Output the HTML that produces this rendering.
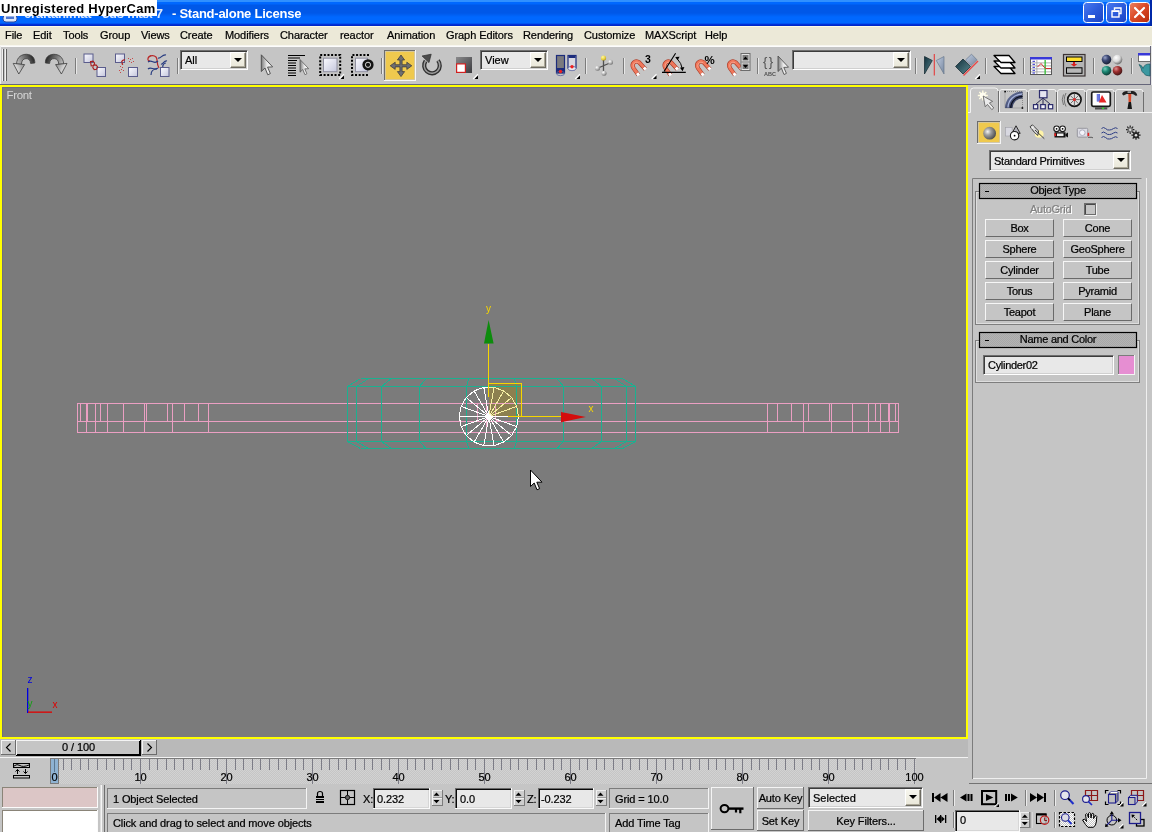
<!DOCTYPE html>
<html><head><meta charset="utf-8"><title>3dsmax</title>
<style>
*{box-sizing:border-box;margin:0;padding:0}
html,body{width:1152px;height:832px;overflow:hidden;background:#c5c5c5;font-family:"Liberation Sans",sans-serif;font-size:11px;color:#000}
.a{position:absolute}
#menu span,.tx,.rt,.bt,.bx{-webkit-text-stroke:.22px currentColor}
svg{display:block;overflow:hidden}
#title{left:0;top:0;width:1152px;height:26px;background:linear-gradient(#3090ff 0,#3090ff 2px,#0068ff 2px,#0068ff 4px,#0058e8 5px,#0058e8 13px,#0068ff 17px,#0068ff 23px,#0030d8 24.5px,#0024c0 26px)}
#title .t{left:172px;top:6px;color:#fff;font-weight:bold;font-size:13px;line-height:15px;white-space:nowrap;letter-spacing:-.25px}
#hc{left:0;top:0;width:157px;height:16px;background:#fff}
#hc span{position:absolute;left:1px;top:1px;font-weight:bold;font-size:13px;line-height:15px;white-space:nowrap;color:#000;letter-spacing:.27px}
.wb{top:2px;width:21px;height:21px;border:1px solid #fff;border-radius:3.5px;background:linear-gradient(135deg,#4878f0 0,#2c5cdc 50%,#1c44c4 100%)}
#menu{left:0;top:26px;width:1152px;height:19px;background:#ece9d8;border-top:1px solid #fbfbe8}
#menu span{position:absolute;letter-spacing:-.08px;top:2px;font-size:11px;line-height:13px;white-space:nowrap}
#vp{left:0;top:85px;width:968px;height:654px;background:#7b7b7b;border:2px solid #ffff00;box-shadow:inset 1px 1px 0 #6e6e7c}

#rp{left:968px;top:85px;width:184px;height:700px;background:#c5c5c5}
#bot{left:0;top:739px;width:1152px;height:93px;background:#c5c5c5}
/* sunken combo / edit */
.sk{position:absolute;background:#e8e8e8;border:1px solid;border-color:#6e6e6e #fff #fff #6e6e6e;box-shadow:inset 1px 1px 0 #3c3c3c,inset -1px -1px 0 #d0d0d0;white-space:nowrap;overflow:hidden}
.sk .tx{position:absolute;left:4px;top:3px;font-size:11px;line-height:13px}
.cb{position:absolute;right:1px;top:1px;bottom:1px;width:16px;background:linear-gradient(#f7f6ee,#e9e7d9);border:1px solid;border-color:#fff #6c6a60 #6c6a60 #fff;box-shadow:inset -1px -1px 0 #aca899}
.cb:after{content:"";position:absolute;left:3px;top:5px;border:4px solid transparent;border-top:4px solid #000;border-bottom:0}
</style></head><body><div id="w" style="position:absolute;left:0;top:0;width:1152px;height:832px;overflow:hidden;will-change:transform">
<div id="title" class="a"><span class="a t" style="left:24px;opacity:.85">craftanimat - 3ds max 7</span><span class="a t">- Stand-alone License</span>
<svg class="a" style="left:2px;top:14px" width="17" height="9" viewBox="0 0 17 9"><rect x="1" y="1" width="14" height="7" rx="3" fill="#dfe8f8" stroke="#2848a0" stroke-width="1"/><rect x="4" y="2.500" width="8" height="2.500" fill="#5078d0"/></svg>
<div id="hc" class="a"><span>Unregistered HyperCam</span></div>
<div class="a" style="left:1150px;top:0;width:2px;height:26px;background:#0028a8"></div>
<div class="a wb" style="left:1083px"><svg width="19" height="19" viewBox="0 0 19 19"><rect x="4" y="12" width="7" height="3" fill="#fff"/></svg></div>
<div class="a wb" style="left:1106px"><svg width="19" height="19" viewBox="0 0 19 19"><path d="M7.500 7 V5 H14 V10.500 H12" fill="none" stroke="#fff" stroke-width="1.400"/><rect x="5" y="8" width="7" height="6" fill="none" stroke="#fff" stroke-width="1.400"/><rect x="5" y="7.500" width="7" height="1.500" fill="#fff"/></svg></div>
<div class="a wb" style="left:1129px;background:linear-gradient(135deg,#ec8060 0,#dc4c28 45%,#b82c0c 100%)"><svg width="19" height="19" viewBox="0 0 19 19"><path d="M5 5 L14 14 M14 5 L5 14" stroke="#fff" stroke-width="2.200" stroke-linecap="round"/></svg></div>
</div>
<div id="menu" class="a">
<span style="left:5px">File</span><span style="left:33px">Edit</span><span style="left:63px">Tools</span><span style="left:100px">Group</span><span style="left:141px">Views</span><span style="left:180px">Create</span><span style="left:225px">Modifiers</span><span style="left:280px">Character</span><span style="left:340px">reactor</span><span style="left:387px">Animation</span><span style="left:446px">Graph Editors</span><span style="left:523px">Rendering</span><span style="left:584px">Customize</span><span style="left:645px">MAXScript</span><span style="left:705px">Help</span>
</div>
<svg class="a" style="left:0;top:45px" width="1152" height="40" viewBox="0 45 1152 40">
<defs>
<linearGradient id="gUndo" gradientUnits="userSpaceOnUse" x1="13" y1="70" x2="35" y2="60"><stop offset="0" stop-color="#fafafa"/><stop offset=".4" stop-color="#a4a4a4"/><stop offset=".75" stop-color="#5c5c5c"/><stop offset="1" stop-color="#242424"/></linearGradient>
<linearGradient id="gRedo" x1="1" y1="1" x2="0" y2="0"><stop offset="0" stop-color="#f4f4f4"/><stop offset=".5" stop-color="#a8a8a8"/><stop offset="1" stop-color="#383838"/></linearGradient>
<linearGradient id="gSq" x1="0" y1="0" x2="1" y2="1"><stop offset="0" stop-color="#fbfbff"/><stop offset="1" stop-color="#c4c6dc"/></linearGradient>
<linearGradient id="gCur" x1="0" y1="0" x2="1" y2="0"><stop offset="0" stop-color="#7c7c7c"/><stop offset=".5" stop-color="#e8e8e8"/><stop offset="1" stop-color="#fff"/></linearGradient>
<linearGradient id="gMag" x1="0" y1="0" x2="1" y2="1"><stop offset="0" stop-color="#f08a6c"/><stop offset="1" stop-color="#d8452c"/></linearGradient>
<radialGradient id="bNavy" cx=".35" cy=".3" r=".8"><stop offset="0" stop-color="#9aa4c8"/><stop offset=".4" stop-color="#3c4874"/><stop offset="1" stop-color="#141828"/></radialGradient>
<radialGradient id="bWhite" cx=".35" cy=".3" r=".8"><stop offset="0" stop-color="#fff"/><stop offset=".5" stop-color="#d8d8d8"/><stop offset="1" stop-color="#505050"/></radialGradient>
<radialGradient id="bTeal" cx=".35" cy=".3" r=".8"><stop offset="0" stop-color="#7cd0c0"/><stop offset=".4" stop-color="#1c8874"/><stop offset="1" stop-color="#0a2c28"/></radialGradient>
<radialGradient id="bRed" cx=".35" cy=".3" r=".8"><stop offset="0" stop-color="#e09090"/><stop offset=".4" stop-color="#a03030"/><stop offset="1" stop-color="#301010"/></radialGradient>
<radialGradient id="bGray" cx=".35" cy=".3" r=".8"><stop offset="0" stop-color="#fff"/><stop offset=".5" stop-color="#b8b8b8"/><stop offset="1" stop-color="#606060"/></radialGradient>
<radialGradient id="bYel" cx=".35" cy=".3" r=".8"><stop offset="0" stop-color="#fff8a0"/><stop offset=".6" stop-color="#e8d040"/><stop offset="1" stop-color="#a08818"/></radialGradient>
<linearGradient id="gTealTri" x1="0" y1="0" x2="1" y2="1"><stop offset="0" stop-color="#12303c"/><stop offset="1" stop-color="#5a8890"/></linearGradient>
<linearGradient id="gLtTri" x1="0" y1="0" x2="1" y2="1"><stop offset="0" stop-color="#c0cce0"/><stop offset="1" stop-color="#7888a0"/></linearGradient>
<g id="sep"><rect x="0" y="58" width="1" height="16" fill="#7c7c7c"/><rect x="1" y="58" width="1" height="16" fill="#e8e8e8"/></g>
<g id="tri"><path d="M0 0 L0 -3.6 L-3.6 0 Z" fill="#000"/><path d="M-4.8 0 L0 -4.8" stroke="#fff" stroke-width="1.1" fill="none"/></g>
<g id="cursor"><path d="M0 0 L0 15.5 L3.4 12.2 L6 18.5 L8.4 17.4 L5.8 11.4 L10.5 11.2 Z" fill="url(#gCur)" stroke="#505050" stroke-width=".9" stroke-linejoin="round"/></g>
<g id="magnet"><path d="M8 15.6 L3 8.6 C0.4 4.4 4.6 -0.2 8.8 3 L15 9.8" fill="none" stroke="#a83a26" stroke-width="4.2"/><path d="M6.6 13.6 L3 8.6 C0.4 4.4 4.6 -0.2 8.8 3 L13.2 7.8" fill="none" stroke="#f0785c" stroke-width="3"/><path d="M3.3 8.2 C1.4 4.8 4.8 1.2 8.2 3.4" fill="none" stroke="#f8a48c" stroke-width="1"/><path d="M6.7 13.7 L8.3 16 M13.3 7.9 L15.3 10.1" stroke="#fff" stroke-width="3" fill="none"/></g>
</defs>
<!-- frame -->
<rect x="0" y="45" width="1152" height="1" fill="#f8f7f0"/><rect x="0" y="46" width="1150" height="1" fill="#fcfcfc"/>
<rect x="0" y="84" width="1151" height="1" fill="#66667a"/>
<rect x="1150" y="46" width="1" height="39" fill="#66667a"/>
<rect x="1151" y="46" width="1" height="39" fill="#e6e6e6"/>
<!-- grip -->
<rect x="2" y="49" width="1" height="32" fill="#f0f0f0"/><rect x="3" y="49" width="1" height="32" fill="#606060"/>
<rect x="5" y="49" width="1" height="32" fill="#f0f0f0"/><rect x="6" y="49" width="1" height="32" fill="#606060"/><rect x="0" y="46" width="1" height="38" fill="#ececec"/>
<!-- undo -->
<g stroke="#3c3c3c" stroke-width=".8" stroke-linejoin="round">
<path d="M16.5 64 C17 56.5 22 54.3 26.5 54.3 C32 54.5 35 58 34.8 63 L30.6 63.4 C30.4 60 28.6 58.6 26 58.6 C23 58.8 21.6 60.6 21.4 64.4 Z" fill="url(#gUndo)"/>
<path d="M13.2 63.4 L24.6 64.6 L18.8 74 Z" fill="url(#gUndo)"/>
<g transform="translate(80.2 0) scale(-1 1)">
<path d="M16.5 64 C17 56.5 22 54.3 26.5 54.3 C32 54.5 35 58 34.8 63 L30.6 63.4 C30.4 60 28.6 58.6 26 58.6 C23 58.8 21.6 60.6 21.4 64.4 Z" fill="url(#gUndo)"/>
<path d="M13.2 63.4 L24.6 64.6 L18.8 74 Z" fill="url(#gUndo)"/>
</g></g>
<use href="#sep" x="75"/>
<!-- link -->
<g stroke="#5a5c8c" stroke-width="1">
<rect x="84" y="54" width="9" height="8.5" fill="url(#gSq)"/><rect x="97" y="67.5" width="8.5" height="9" fill="url(#gSq)"/>
</g>
<path d="M90.5 61.5 l2.5 -.4 l1.6 2 l-1 2.4 l-2.4 .3 z M93.6 65.3 l2.4 -.4 l1.6 2 l-1 2.4 l-2.4 .3 l-1.4 -2z" fill="none" stroke="#a82020" stroke-width="1.1"/>
<!-- unlink -->
<g stroke="#5a5c8c" stroke-width="1">
<rect x="115.5" y="54" width="9" height="8.5" fill="url(#gSq)"/><rect x="128.5" y="67.5" width="9" height="9" fill="url(#gSq)"/>
</g>
<path d="M121.5 62 q1 -2.6 3.4 -2 M122 62.5 l.6 2.4" fill="none" stroke="#b02020" stroke-width="1.3"/>
<g fill="#c84848"><rect x="128" y="58" width="1" height="1"/><rect x="130" y="59" width="1" height="1"/><rect x="132" y="58" width="1" height="1"/><rect x="129" y="61" width="1" height="1"/><rect x="131" y="62" width="1" height="1"/><rect x="133" y="61" width="1" height="1"/><rect x="120" y="66" width="1" height="1"/><rect x="122" y="67" width="1" height="1"/><rect x="121" y="69" width="1" height="1"/><rect x="119" y="70" width="1" height="1"/><rect x="123" y="70" width="1" height="1"/><rect x="120" y="72" width="1" height="1"/></g>
<!-- bind spacewarp -->
<g fill="none" stroke-width="1.2">
<path d="M148 58 c2 -3 6 -3 8 -1 c2 2 0 6 3 11" stroke="#b82828"/><path d="M150 61 c-3 0 -3 -4 1 -5.5" stroke="#b82828"/>
<path d="M148 62 c4 -3 6 3 10 -1" stroke="#283c80"/><path d="M148 69 c3 -3 6 2 10 -1" stroke="#283c80"/><path d="M151 75 c0 -4 2 -6 6 -6" stroke="#283c80"/>
<path d="M158 58 c3 1 4 -4 8 -3" stroke="#283c80"/><path d="M161 64 c2 1 3 -4 6 -3" stroke="#283c80"/><path d="M163 68 c-1 -3 1 -5 3 -5" stroke="#283c80"/>
</g>
<rect x="160.500" y="67.500" width="8.500" height="9" fill="url(#gSq)" stroke="#5a5c8c"/>
<use href="#sep" x="177"/>
<!-- select -->
<g transform="translate(261.3 54.8) scale(1.08)"><use href="#cursor"/></g>
<!-- select by name -->
<g fill="#000"><rect x="288" y="55" width="17" height="1"/><rect x="288" y="57.500" width="12" height="1"/><rect x="288" y="60" width="9" height="1"/><rect x="288" y="62.500" width="8" height="1"/><rect x="288" y="65" width="8" height="1"/><rect x="288" y="67.500" width="8" height="1"/><rect x="288" y="70" width="8" height="1"/><rect x="288" y="72.500" width="8" height="1"/><rect x="288" y="75" width="8" height="1"/></g>
<g transform="translate(300 59.500) scale(.82)"><use href="#cursor"/></g>
<!-- rect region -->
<rect x="320.2" y="55" width="20" height="20" fill="none" stroke="#000" stroke-width="2" stroke-dasharray="2 1.640"/>
<rect x="323.500" y="58.200" width="13.5" height="13.500" fill="url(#gSq)" stroke="#9090a0" stroke-width="1"/>
<use href="#tri" x="344" y="79"/>
<!-- window crossing -->
<path d="M369 55 H352 V75 H369" fill="none" stroke="#000" stroke-width="2" stroke-dasharray="2 1.640"/>
<rect x="355.500" y="58.200" width="12" height="13.500" fill="url(#gSq)" stroke="#9090a0" stroke-width="1"/>
<circle cx="368" cy="64.800" r="5.600" fill="#141414"/><circle cx="368" cy="64.800" r="2.600" fill="none" stroke="#d8d8d8" stroke-width="1"/>
<use href="#sep" x="381"/>
<!-- move (pressed) -->
<rect x="384" y="50" width="32" height="31" fill="#f6f6f6"/><rect x="384" y="50" width="31" height="30" fill="#6c6c6c"/><rect x="385" y="51" width="30" height="29" fill="#c8c8c8"/><rect x="385.6" y="51.600" width="28.800" height="27.800" fill="#efc94e"/>
<g fill="#6e6e70" stroke="#34343a" stroke-width=".7" stroke-linejoin="round">
<path d="M401 55 l3.600 5 h-2.500 v4.700 h4.700 v-2.500 l5 3.600 l-5 3.600 v-2.500 h-4.700 v4.700 h2.500 l-3.600 5 l-3.600 -5 h2.500 v-4.700 h-4.700 v2.500 l-5 -3.600 l5 -3.600 v2.500 h4.700 v-4.700 h-2.500 z"/>
</g>
<!-- rotate -->
<path d="M437.970 60.490 A 7.800 7.800 0 1 1 425.600 61" fill="none" stroke="#303030" stroke-width="4.200"/>
<path d="M437.970 60.490 A 7.800 7.800 0 1 1 425.600 61" fill="none" stroke="#9c9c9c" stroke-width="1.500"/>
<path d="M422.100 56 L431.200 54.200 L429 62.600 Z" fill="#4c4c4c" stroke="#2c2c2c" stroke-width=".7" stroke-linejoin="round"/>
<!-- scale -->
<linearGradient id="gSc" x1="0" y1="0" x2="1" y2="1"><stop offset="0" stop-color="#8a8a8c"/><stop offset="1" stop-color="#3a3a3e"/></linearGradient>
<rect x="456" y="57" width="16" height="16" fill="url(#gSc)"/>
<rect x="456.600" y="63.900" width="8.800" height="8.500" fill="#fff" stroke="#d02020" stroke-width="1.200"/>
<use href="#tri" x="478" y="79"/>
<!-- use pivot -->
<rect x="556.500" y="55.500" width="8" height="17.500" fill="#7a7a7e" stroke="#1c2c7c" stroke-width="1.200"/><rect x="557" y="68" width="7" height="5" fill="#1c2c7c"/>
<ellipse cx="560.500" cy="73.500" rx="4" ry="2.200" fill="none" stroke="#5a64a0" stroke-width=".8"/><circle cx="560.500" cy="71.500" r="1.700" fill="#f02020"/>
<rect x="568" y="55.500" width="8" height="12.500" fill="#d8d8e0" stroke="#1c2c7c" stroke-width="1.200"/><rect x="568.500" y="56" width="7" height="2" fill="#1c2c7c"/>
<ellipse cx="572" cy="68.500" rx="4" ry="2.200" fill="#e8e8f0" stroke="#5a64a0" stroke-width=".8"/><circle cx="572" cy="66.800" r="1.700" fill="#f02020"/>
<use href="#tri" x="580" y="79"/>
<use href="#sep" x="585"/>
<!-- manipulate -->
<path d="M603.500 58 V73 M597 68.500 L611 62.500" stroke="#505050" stroke-width="1.300"/>
<circle cx="603.500" cy="58" r="2.600" fill="url(#bYel)"/><circle cx="597.500" cy="68.300" r="2.500" fill="url(#bGray)"/><circle cx="610.500" cy="62.300" r="2.500" fill="url(#bGray)"/><circle cx="604" cy="73.300" r="2.500" fill="url(#bGray)"/>
<use href="#sep" x="623"/>
<!-- snaps -->
<use href="#magnet" x="630.500" y="59.500"/>
<text x="645" y="63" font-family="Liberation Sans" font-weight="bold" font-size="10.500" fill="#000">3</text>
<use href="#tri" x="656.500" y="79"/>
<use href="#magnet" x="662.500" y="59.500"/>
<path d="M662 72.400 H685.800 M664 71.500 L675.600 53.200" stroke="#000" stroke-width="1.100" fill="none"/>
<path d="M677 58.500 Q681.500 63 682.500 69.500" stroke="#000" stroke-width="1" fill="none"/><path d="M675.200 57 l4.400 -.3 l-2 3.600 z M682.600 71.300 l-2.600 -3.600 l4.400 -.600 z" fill="#000"/>
<use href="#magnet" x="695" y="59.500"/>
<text x="704.500" y="64" font-family="Liberation Sans" font-weight="bold" font-size="11.500" fill="#000">%</text>
<use href="#magnet" x="727" y="59.500"/>
<rect x="741" y="53.500" width="9" height="17" fill="#e4e4e4" stroke="#6c6c6c" stroke-width="1"/><rect x="741.500" y="61.500" width="8" height="1" fill="#6c6c6c"/>
<rect x="742.500" y="55" width="6" height="5.500" fill="#7c7c7c"/><rect x="742.500" y="63.500" width="6" height="5.500" fill="#7c7c7c"/>
<path d="M743 59.500 l2.500 -3 l2.500 3 z M743 65 l2.500 3 l2.500 -3 z" fill="#000"/>
<use href="#sep" x="757"/>
<!-- named sel -->
<text x="763" y="66" font-family="Liberation Sans" font-size="13" fill="#505050" letter-spacing="1.500">{}</text>
<text x="764" y="75.500" font-family="Liberation Sans" font-weight="bold" font-size="5.500" fill="#505050">ABC</text>
<g transform="translate(778 56)"><use href="#cursor"/></g>
<use href="#sep" x="915"/>
<!-- mirror -->
<path d="M924.500 56.500 L924.500 74 L932.300 60.500 Z" fill="url(#gTealTri)" stroke="#10242c" stroke-width=".7"/>
<rect x="933.700" y="54" width="1.300" height="21.500" fill="#e05050"/>
<path d="M944 56.500 L944 74 L936.300 60.500 Z" fill="url(#gLtTri)" stroke="#68788c" stroke-width=".7"/>
<!-- align -->
<path d="M955.500 66.500 L963 59 L970.500 66.500 L963 74 Z" fill="url(#gTealTri)" stroke="#10242c" stroke-width=".7"/>
<path d="M965.500 60 L971.500 54.200 L977 59.800 L971 65.600 Z" fill="url(#gLtTri)" stroke="#68788c" stroke-width=".7"/>
<path d="M963.500 75.500 L978 61" stroke="#e84848" stroke-width="1.400"/>
<use href="#tri" x="980" y="79"/>
<use href="#sep" x="985"/>
<!-- layers -->
<g fill="#fff" stroke="#000" stroke-width="1.300" stroke-linejoin="round">
<path d="M994 66.500 L1009 66.500 L1015 73.500 L1001 73.500 Z"/><path d="M994 61 L1009 61 L1015 68 L1001 68 Z"/><path d="M994 55.500 L1009 55.500 L1015 62.500 L1001 62.500 Z"/>
</g>
<use href="#sep" x="1023"/>
<!-- curve editor -->
<rect x="1030.500" y="57.500" width="21" height="17" fill="#fff" stroke="#585858" stroke-width="1"/>
<rect x="1030" y="57" width="22" height="2.500" fill="#3838d8"/>
<g fill="#9c9c9c"><rect x="1031" y="62.500" width="20" height=".8"/><rect x="1031" y="65.500" width="20" height=".8"/><rect x="1031" y="68.500" width="20" height=".8"/><rect x="1031" y="71.500" width="20" height=".8"/><rect x="1036.500" y="60" width=".8" height="14"/></g>
<g fill="#2828c8"><rect x="1032.500" y="60.800" width="2.500" height="1"/><rect x="1032.500" y="63.800" width="2.500" height="1"/><rect x="1032.500" y="66.800" width="2.500" height="1"/><rect x="1032.500" y="69.800" width="2.500" height="1"/><rect x="1032.500" y="72.500" width="2.500" height="1"/></g>
<rect x="1044.500" y="60" width="1.300" height="14.500" fill="#30c030"/>
<path d="M1037.500 67 L1041 63.500 L1044 67 L1046 68.500 L1051 68.500" fill="none" stroke="#d03030" stroke-width="1"/>
<!-- schematic -->
<rect x="1063.500" y="54.500" width="21.500" height="21.500" fill="#b4b4b4" stroke="#3c3434" stroke-width="1.200"/>
<rect x="1066.500" y="57" width="15.500" height="4.500" fill="#ffe030" stroke="#000" stroke-width="1"/>
<rect x="1066.500" y="67.800" width="15.500" height="5.500" fill="#b8b8b8" stroke="#000" stroke-width="1"/>
<path d="M1073 62 h2 v2 h2.200 l-3.200 2.800 l-3.200 -2.800 h2.200 z" fill="#d82020"/>
<use href="#sep" x="1093"/>
<!-- material editor -->
<circle cx="1106.500" cy="59.600" r="4.800" fill="url(#bNavy)"/><circle cx="1117.500" cy="59.600" r="4.800" fill="url(#bWhite)"/><circle cx="1106.500" cy="70.700" r="4.800" fill="url(#bTeal)"/><circle cx="1117.500" cy="70.700" r="4.800" fill="url(#bRed)"/>
<use href="#sep" x="1131"/>
<!-- render scene -->
<rect x="1138.500" y="53.500" width="12" height="8" fill="#fff" stroke="#505050" stroke-width=".8"/><rect x="1138" y="53" width="12" height="2.500" fill="#3838d8"/>
<path d="M1139 64.500 q3 .5 4 4 q1 -4.500 7 -4.500 V76 q-5 0 -6.500 -3 q-2 -1 -2.500 -5 z" fill="#3c98a0" stroke="#1c5860" stroke-width=".7"/>
</svg>
<div class="sk" style="left:180px;top:50px;width:68px;height:20px"><span class="tx">All</span><div class="cb"></div></div>
<div class="sk" style="left:480px;top:50px;width:68px;height:20px"><span class="tx">View</span><div class="cb"></div></div>
<div class="sk" style="left:792px;top:50px;width:119px;height:20px"><div class="cb"></div></div>
<div id="vp" class="a"></div>
<svg class="a" style="left:0;top:85px" width="968" height="654" viewBox="0 85 968 654" shape-rendering="crispEdges">
<rect x="489" y="384" width="32" height="32" fill="#8c8050"/>
<rect x="77" y="403" width="822" height="1" fill="#eb9fc3"/>
<rect x="77" y="421" width="822" height="1" fill="#eb9fc3"/>
<rect x="77" y="432" width="822" height="1" fill="#eb9fc3"/>
<rect x="77" y="403" width="1" height="18" fill="#eb9fc3"/>
<rect x="898" y="403" width="1" height="18" fill="#eb9fc3"/>
<rect x="80" y="403" width="1" height="18" fill="#eb9fc3"/>
<rect x="895" y="403" width="1" height="18" fill="#eb9fc3"/>
<rect x="86" y="403" width="1" height="18" fill="#eb9fc3"/>
<rect x="889" y="403" width="1" height="18" fill="#eb9fc3"/>
<rect x="87" y="403" width="1" height="18" fill="#eb9fc3"/>
<rect x="888" y="403" width="1" height="18" fill="#eb9fc3"/>
<rect x="95" y="403" width="1" height="18" fill="#eb9fc3"/>
<rect x="880" y="403" width="1" height="18" fill="#eb9fc3"/>
<rect x="100" y="403" width="1" height="18" fill="#eb9fc3"/>
<rect x="875" y="403" width="1" height="18" fill="#eb9fc3"/>
<rect x="107" y="403" width="1" height="18" fill="#eb9fc3"/>
<rect x="868" y="403" width="1" height="18" fill="#eb9fc3"/>
<rect x="123" y="403" width="1" height="18" fill="#eb9fc3"/>
<rect x="852" y="403" width="1" height="18" fill="#eb9fc3"/>
<rect x="144" y="403" width="1" height="18" fill="#eb9fc3"/>
<rect x="831" y="403" width="1" height="18" fill="#eb9fc3"/>
<rect x="146" y="403" width="1" height="18" fill="#eb9fc3"/>
<rect x="829" y="403" width="1" height="18" fill="#eb9fc3"/>
<rect x="167" y="403" width="1" height="18" fill="#eb9fc3"/>
<rect x="808" y="403" width="1" height="18" fill="#eb9fc3"/>
<rect x="172" y="403" width="1" height="18" fill="#eb9fc3"/>
<rect x="803" y="403" width="1" height="18" fill="#eb9fc3"/>
<rect x="184" y="403" width="1" height="18" fill="#eb9fc3"/>
<rect x="791" y="403" width="1" height="18" fill="#eb9fc3"/>
<rect x="198" y="403" width="1" height="18" fill="#eb9fc3"/>
<rect x="777" y="403" width="1" height="18" fill="#eb9fc3"/>
<rect x="208" y="403" width="1" height="18" fill="#eb9fc3"/>
<rect x="767" y="403" width="1" height="18" fill="#eb9fc3"/>
<rect x="77" y="421" width="1" height="12" fill="#eb9fc3"/>
<rect x="898" y="421" width="1" height="12" fill="#eb9fc3"/>
<rect x="86" y="421" width="1" height="12" fill="#eb9fc3"/>
<rect x="889" y="421" width="1" height="12" fill="#eb9fc3"/>
<rect x="95" y="421" width="1" height="12" fill="#eb9fc3"/>
<rect x="880" y="421" width="1" height="12" fill="#eb9fc3"/>
<rect x="107" y="421" width="1" height="12" fill="#eb9fc3"/>
<rect x="868" y="421" width="1" height="12" fill="#eb9fc3"/>
<rect x="123" y="421" width="1" height="12" fill="#eb9fc3"/>
<rect x="852" y="421" width="1" height="12" fill="#eb9fc3"/>
<rect x="144" y="421" width="1" height="12" fill="#eb9fc3"/>
<rect x="831" y="421" width="1" height="12" fill="#eb9fc3"/>
<rect x="172" y="421" width="1" height="12" fill="#eb9fc3"/>
<rect x="803" y="421" width="1" height="12" fill="#eb9fc3"/>
<rect x="208" y="421" width="1" height="12" fill="#eb9fc3"/>
<rect x="767" y="421" width="1" height="12" fill="#eb9fc3"/>
<rect x="477" y="403" width="1" height="18" fill="#eb9fc3"/>
<rect x="486" y="403" width="1" height="29" fill="#eb9fc3"/>
<rect x="495" y="403" width="1" height="16" fill="#eb9fc3"/>
<path d="M495.5 419 L498 421.5" stroke="#eb9fc3" stroke-width="1" fill="none"/>
</svg>
<svg class="a" style="left:0;top:85px" width="968" height="654" viewBox="0 85 968 654">
<path d="M360.5 378.5 H622.5 M347.5 386.5 H635.5 M347.5 441.5 H635.5 M360.5 448.5 H622.5 M347.5 386.5 V441.5 M356.5 386.5 V441.5 M381.5 386.5 V441.5 M419.5 386.5 V441.5 M466.5 386.5 V441.5 M516.5 386.5 V441.5 M563.5 386.5 V441.5 M601.5 386.5 V441.5 M626.5 386.5 V441.5 M635.5 386.5 V441.5 M347.5 386.5 L360.5 378.5 M347.5 441.5 L360.5 448.5 M356.5 386.5 L368.6 378.5 M356.5 441.5 L368.6 448.5 M381.5 386.5 L391.4 378.5 M381.5 441.5 L391.4 448.5 M419.5 386.5 L426.0 378.5 M419.5 441.5 L426.0 448.5 M466.5 386.5 L468.8 378.5 M466.5 441.5 L468.8 448.5 M516.5 386.5 L514.2 378.5 M516.5 441.5 L514.2 448.5 M563.5 386.5 L557.0 378.5 M563.5 441.5 L557.0 448.5 M601.5 386.5 L591.6 378.5 M601.5 441.5 L591.6 448.5 M626.5 386.5 L614.4 378.5 M626.5 441.5 L614.4 448.5 M635.5 386.5 L622.5 378.5 M635.5 441.5 L622.5 448.5 M347.5 386.5 L360.5 378.5 M635.5 386.5 L622.5 378.5 M347.5 441.5 L360.5 448.5 M635.5 441.5 L622.5 448.5" fill="none" stroke="#1cb090" stroke-width="1" shape-rendering="crispEdges"/>
<path d="M518.5 416.5 L516.7 426.6 L511.6 435.5 L503.7 442.1 L494.0 445.7 L483.8 445.7 L474.1 442.1 L466.2 435.5 L461.1 426.6 L459.3 416.5 L461.1 406.4 L466.2 397.5 L474.1 390.9 L483.8 387.3 L494.0 387.3 L503.7 390.9 L511.6 397.5 L516.7 406.4 Z M488.9 416.5 L518.5 416.5 M488.9 416.5 L516.7 426.6 M488.9 416.5 L511.6 435.5 M488.9 416.5 L503.7 442.1 M488.9 416.5 L494.0 445.7 M488.9 416.5 L483.8 445.7 M488.9 416.5 L474.1 442.1 M488.9 416.5 L466.2 435.5 M488.9 416.5 L461.1 426.6 M488.9 416.5 L459.3 416.5 M488.9 416.5 L461.1 406.4 M488.9 416.5 L466.2 397.5 M488.9 416.5 L474.1 390.9 M488.9 416.5 L483.8 387.3 M488.9 416.5 L494.0 387.3 M488.9 416.5 L503.7 390.9 M488.9 416.5 L511.6 397.5 M488.9 416.5 L516.7 406.4 " fill="none" stroke="#fff" stroke-width="1" shape-rendering="crispEdges"/>
<clipPath id="cpl"><rect x="489" y="384" width="32" height="32"/></clipPath><path d="M518.5 416.5 L516.7 426.6 L511.6 435.5 L503.7 442.1 L494.0 445.7 L483.8 445.7 L474.1 442.1 L466.2 435.5 L461.1 426.6 L459.3 416.5 L461.1 406.4 L466.2 397.5 L474.1 390.9 L483.8 387.3 L494.0 387.3 L503.7 390.9 L511.6 397.5 L516.7 406.4 Z M488.9 416.5 L518.5 416.5 M488.9 416.5 L516.7 426.6 M488.9 416.5 L511.6 435.5 M488.9 416.5 L503.7 442.1 M488.9 416.5 L494.0 445.7 M488.9 416.5 L483.8 445.7 M488.9 416.5 L474.1 442.1 M488.9 416.5 L466.2 435.5 M488.9 416.5 L461.1 426.6 M488.9 416.5 L459.3 416.5 M488.9 416.5 L461.1 406.4 M488.9 416.5 L466.2 397.5 M488.9 416.5 L474.1 390.9 M488.9 416.5 L483.8 387.3 M488.9 416.5 L494.0 387.3 M488.9 416.5 L503.7 390.9 M488.9 416.5 L511.6 397.5 M488.9 416.5 L516.7 406.4 " fill="none" stroke="#f6efa4" stroke-width="1" shape-rendering="crispEdges" clip-path="url(#cpl)"/>
<circle cx="488.9" cy="416.5" r="2.4" fill="#fff"/>
<g fill="#f6d600" shape-rendering="crispEdges"><rect x="488" y="344" width="1" height="53"/><rect x="508" y="416" width="53" height="1"/><rect x="488" y="383" width="34" height="1"/><rect x="521" y="383" width="1" height="34"/></g>
<path d="M488.600 320 L484 343.500 H493.600 Z" fill="#0c8c0c"/>
<path d="M585.800 417 L561 412 V422.300 Z" fill="#d40c0c"/>
<text x="486" y="311.500" font-family="Liberation Sans" font-size="10" fill="#f6d600">y</text>
<text x="588.500" y="412" font-family="Liberation Sans" font-size="10" fill="#f6d600">x</text>
<rect x="27" y="688" width="1.300" height="25" fill="#0000e0"/><rect x="28" y="711.500" width="24" height="1.300" fill="#e00000"/>
<text x="27.500" y="683" font-family="Liberation Sans" font-size="10" fill="#0000e0">z</text><text x="52.500" y="708" font-family="Liberation Sans" font-size="10" fill="#e00000">x</text><text x="27.500" y="707" font-family="Liberation Sans" font-size="10" fill="#10a010">y</text>
<text x="6.500" y="99" font-family="Liberation Sans" font-size="11.500" fill="#d6d6d6" letter-spacing="-.35">Front</text>
<path d="M530.500 470 V486.500 L534.200 483 L537 489.800 L539.600 488.600 L536.800 482.200 H542 Z" fill="#fff" stroke="#000" stroke-width="1" stroke-linejoin="round"/>
</svg>
<svg class="a" style="left:968px;top:85px" width="184" height="700" viewBox="968 85 184 700">
<defs>
<radialGradient id="sph" cx=".35" cy=".38" r=".75"><stop offset="0" stop-color="#f4f4f4"/><stop offset=".35" stop-color="#a0a0a0"/><stop offset="1" stop-color="#3c3c3c"/></radialGradient>
<linearGradient id="gBend" x1="0" y1="0" x2="1" y2="1"><stop offset="0" stop-color="#8090c0"/><stop offset="1" stop-color="#10142c"/></linearGradient>
<pattern id="dith" width="2" height="2" patternUnits="userSpaceOnUse"><rect width="2" height="2" fill="#b4b4b4"/><rect width="1" height="1" fill="#a8a8a8"/><rect x="1" y="1" width="1" height="1" fill="#a8a8a8"/></pattern>
</defs>
<!-- tabs -->
<g fill="none" stroke-width="1">
<path d="M968 112.500 H970.500 V91 Q970.500 88 973.500 88 H995 Q998 88 998 91" stroke="#f2f2f2"/>
<path d="M998.500 91 V112" stroke="#6e6e6e"/>
<path d="M999.500 112 V92 Q999.500 89.500 1002 89.500 H1025 Q1027 89.500 1027 92 M1028.500 112 V92 Q1028.500 89.500 1031 89.500 H1054 Q1056 89.500 1056 92 M1057.500 112 V92 Q1057.500 89.500 1060 89.500 H1083 Q1085 89.500 1085 92 M1086.500 112 V92 Q1086.500 89.500 1089 89.500 H1112 Q1114 89.500 1114 92 M1115.500 112 V92 Q1115.500 89.500 1118 89.500 H1141 Q1143 89.500 1143 92" stroke="#f2f2f2"/>
<path d="M1027.500 92 V112 M1056.500 92 V112 M1085.500 92 V112 M1114.500 92 V112 M1143.500 92 V112" stroke="#6e6e6e"/>
<path d="M999 112.500 H1152" stroke="#f2f2f2"/>
</g>
<!-- create tab icon -->
<g stroke="#fffce0" stroke-width="1.400"><path d="M982.800 90.500 V100.500 M977.800 95.500 H987.800 M979.300 92 L986.300 99 M986.300 92 L979.300 99"/></g>
<circle cx="982.800" cy="95.500" r="3" fill="#fffdf0"/>
<path d="M983.200 96 L985.200 106.800 L987.400 104.400 L991.800 109.600 L993.800 108 L989.400 102.900 L992.600 101.400 Z" fill="#ececec" stroke="#5a5a5a" stroke-width=".8" stroke-linejoin="round"/>
<!-- modify -->
<rect x="1005" y="91.500" width="17.500" height="16.500" fill="none" stroke="#606060" stroke-width=".6" stroke-dasharray="1 1"/>
<rect x="1004.300" y="90.800" width="1.600" height="1.600" fill="#000"/><rect x="1021.600" y="107.200" width="1.600" height="1.600" fill="#000"/>
<path d="M1005 108 A 17.500 16.500 0 0 1 1022.500 91.500 V98.500 A 10 9.500 0 0 0 1012.500 108 Z" fill="url(#gBend)"/>
<path d="M1008 107.500 A 14.500 14 0 0 1 1022 94" fill="none" stroke="#a8b4dc" stroke-width="1.300"/>
<path d="M1010.800 108 A 12 11.500 0 0 1 1022.500 96.300" fill="none" stroke="#0c1020" stroke-width="1.200"/>
<!-- hierarchy -->
<path d="M1043 98 V104.500 M1043 98 L1035.500 104.500 M1043 98 L1050.500 104.500" stroke="#282850" stroke-width="1"/>
<rect x="1039.500" y="90.500" width="7.500" height="7.300" fill="#e4e4f0" stroke="#2c2c6c" stroke-width="1.200"/>
<g fill="#f4f4fc" stroke="#2c2c6c" stroke-width="1.200"><rect x="1033.500" y="104.600" width="4.200" height="4.200"/><rect x="1040.700" y="104.600" width="4.600" height="4.200"/><rect x="1048.500" y="104.600" width="4.200" height="4.200"/></g>
<!-- motion -->
<path d="M1066 93 Q1062.500 99.500 1066 106.500 M1063.500 94.500 Q1061 99.500 1063.500 105" fill="none" stroke="#6a6a6a" stroke-width=".9"/>
<circle cx="1074.400" cy="99.600" r="6.700" fill="#e0e0e0" stroke="#141414" stroke-width="1.700"/>
<path d="M1074.400 94 V105.200 M1069 99.600 H1079.800 M1070.500 95.700 L1078.300 103.500 M1078.300 95.700 L1070.500 103.500" stroke="#505050" stroke-width=".8"/>
<circle cx="1074.400" cy="99.600" r="1.600" fill="#e03030"/>
<!-- display -->
<rect x="1091.700" y="92" width="18.600" height="14.300" rx="1.500" fill="#fff" stroke="#181818" stroke-width="1.700"/>
<rect x="1096.800" y="94" width="3" height="7.500" fill="#3848d0"/><rect x="1097.500" y="94" width="1" height="7.500" fill="#a0a8f0"/>
<path d="M1102 95 L1106.500 102.500 H1098.800 Z" fill="#e82828"/>
<rect x="1095" y="107.300" width="12.300" height="2.200" fill="#505050"/><rect x="1102" y="107.500" width="2.200" height="1.500" fill="#30d030"/>
<!-- utilities hammer -->
<path d="M1122 94 Q1123 91 1127 91 H1133 Q1136.500 91.500 1137.300 95.500 L1135.500 95.800 Q1134 94 1132 94 H1126.500 L1123.500 95.500 Z" fill="#202020"/>
<path d="M1127.500 91.500 h3.500 v1.200 h-3.500z" fill="#e0e0e0"/>
<path d="M1128.300 94 H1131.300 L1131 102 H1128.600 Z" fill="#d84828"/>
<path d="M1128.600 102 H1131 L1132 109 H1127.400 Z" fill="#181818"/>
<!-- category buttons -->
<rect x="977" y="121" width="24" height="23" fill="#f4f4f4"/><rect x="977" y="121" width="23" height="22" fill="#6c6c6c"/><rect x="978" y="122" width="22" height="21" fill="#c8c8c8"/><rect x="978.600" y="122.600" width="20.800" height="19.600" fill="#efc94e"/>
<circle cx="989.600" cy="133.200" r="6.400" fill="url(#sph)"/>
<!-- shapes -->
<rect x="1005.600" y="127.500" width="6.500" height="8.500" fill="#d8d8e0" stroke="#a0a0a8" stroke-width=".6"/>
<path d="M1016 125.800 L1020.200 133.400 H1012 Z" fill="#b0b0b8" stroke="#181818" stroke-width=".9"/>
<circle cx="1014.600" cy="135.700" r="4.200" fill="#fff" stroke="#181818" stroke-width="1.100"/><circle cx="1014.600" cy="135.700" r=".9" fill="#000"/>
<!-- lights -->
<ellipse cx="1039.200" cy="134" rx="4.400" ry="3.800" fill="#fff4a8"/>
<path d="M1030 126.800 L1032.400 124.800 L1038.600 131 L1037.800 135.400 L1034.600 132.600 Z" fill="#dcdcdc" stroke="#303030" stroke-width=".9" stroke-linejoin="round"/>
<path d="M1033.800 126.600 L1031.600 128.600" stroke="#fff" stroke-width="1"/>
<path d="M1035 130 L1044.300 138.700" stroke="#303030" stroke-width=".9"/>
<!-- cameras -->
<circle cx="1056.600" cy="128.800" r="2.800" fill="#fff" stroke="#181818" stroke-width="1.100"/><circle cx="1062.600" cy="128.800" r="2.800" fill="#fff" stroke="#181818" stroke-width="1.100"/><circle cx="1056.600" cy="128.800" r=".9" fill="#000"/><circle cx="1062.600" cy="128.800" r=".9" fill="#000"/>
<rect x="1054.500" y="132.300" width="11" height="5.200" fill="#101010"/><rect x="1057" y="133.500" width="6.500" height="2.600" fill="#f0f0f0"/><rect x="1054.300" y="133.300" width="1.800" height="2.800" fill="#e02020"/>
<path d="M1065.500 134 L1068 132.500 V137.500 L1065.500 136 Z" fill="#101010"/>
<!-- helpers -->
<rect x="1077.300" y="128.300" width="10.400" height="8.800" rx="1" fill="#dcdce4" stroke="#909098" stroke-width=".9"/>
<circle cx="1082.300" cy="132.700" r="2.800" fill="#f4f4fa" stroke="#a8a8b8" stroke-width=".9"/>
<rect x="1087.600" y="132.800" width="1.600" height="3.200" fill="#e82020"/><path d="M1088 137.300 H1092 L1093 138" stroke="#404040" stroke-width=".8" fill="none"/>
<!-- space warps -->
<g fill="none" stroke="#2c3c84" stroke-width="1"><path d="M1101.500 128.500 q2 -2 4 0 t4 1.500 q2 0 4 -1.500 t4 0"/><path d="M1101.500 133 q2 -2 4 0 t4 1.500 q2 0 4 -1.500 t4 0"/><path d="M1101.500 137.500 q2 -2 4 0 t4 1.500 q2 0 4 -1.500 t4 0"/></g>
<!-- systems gears -->
<g stroke="#202020" stroke-width="1.200"><path d="M1130.200 125.500 V133.900 M1126 129.700 H1134.400 M1127.200 126.700 L1133.200 132.700 M1133.200 126.700 L1127.200 132.700"/><path d="M1136 130.600 V139.800 M1131.400 135.200 H1140.600 M1132.700 131.900 L1139.300 138.500 M1139.300 131.900 L1132.700 138.500"/></g>
<circle cx="1130.200" cy="129.700" r="2.800" fill="#707070"/><circle cx="1130.200" cy="129.700" r="1.200" fill="#d8d8d8"/>
<circle cx="1136" cy="135.200" r="3.100" fill="#282828"/><circle cx="1136" cy="135.200" r="1.300" fill="#e0e0e0"/>
<!-- rollout container -->
<path d="M972.500 779 V178.500 H1141.500" fill="none" stroke="#7c7c7c" stroke-width="1"/>
<path d="M1141.500 179 V779 H972.500" fill="none" stroke="#efefef" stroke-width="1" opacity="0"/>
<path d="M1146.500 178 V778.500 H973" stroke="#efefef" stroke-width="1" fill="none"/>
<path d="M969 783.500 H1152" stroke="#727272" stroke-width="1"/>
<!-- group 1 -->
<rect x="975.500" y="191.500" width="164" height="133" fill="none" stroke="#7e7e7e" stroke-width="1"/>
<rect x="976.500" y="192.500" width="162" height="131" fill="none" stroke="#dedede" stroke-width="1"/>
<rect x="979.500" y="183.500" width="157" height="15" fill="url(#dith)" stroke="#000" stroke-width="1.200"/>
<!-- group 2 -->
<rect x="975.500" y="340.500" width="164" height="42" fill="none" stroke="#7e7e7e" stroke-width="1"/>
<rect x="976.500" y="341.500" width="162" height="40" fill="none" stroke="#dedede" stroke-width="1"/>
<rect x="979.500" y="332.500" width="157" height="15" fill="url(#dith)" stroke="#000" stroke-width="1.200"/>
<rect x="985" y="191" width="4" height="1" fill="#000"/><rect x="985" y="340" width="4" height="1" fill="#000"/>
<!-- autogrid checkbox -->
<rect x="1084.500" y="203.500" width="11" height="11" fill="#c5c5c5" stroke="#6c6c6c"/><path d="M1085.500 214 V204.500 H1095" stroke="#484848" fill="none"/><path d="M1084.500 215.500 H1096.500 V203.500" stroke="#f4f4f4" fill="none"/>
<!-- color swatch -->
<rect x="1118" y="355" width="17" height="20" fill="#f4f4f4"/><rect x="1118" y="355" width="16" height="19" fill="#7c7c7c"/><rect x="1119" y="356" width="15" height="18" fill="#e68ed2"/>
</svg>
<style>
.rt{position:absolute;letter-spacing:-.27px;font-size:11px;line-height:13px;white-space:nowrap;text-align:center}
.bt{position:absolute;letter-spacing:-.25px;width:69px;height:18px;background:#c5c5c5;border:1px solid;border-color:#f6f6f6 #6a6a6a #6a6a6a #f6f6f6;font-size:11px;line-height:16px;text-align:center;white-space:nowrap}
</style>
<div class="sk" style="left:989px;top:150px;width:142px;height:21px"><span class="tx" style="top:4px;letter-spacing:-.25px">Standard Primitives</span><div class="cb"></div></div>

<div class="rt" style="left:979px;width:158px;top:184px">Object Type</div>

<div class="rt" style="left:979px;width:158px;top:333px">Name and Color</div>
<div class="rt" style="left:1031px;top:204px;color:#fff">AutoGrid</div><div class="rt" style="left:1030px;top:203px;color:#808080">AutoGrid</div>
<div class="bt" style="left:985px;top:219px">Box</div><div class="bt" style="left:1063px;top:219px">Cone</div>
<div class="bt" style="left:985px;top:240px">Sphere</div><div class="bt" style="left:1063px;top:240px">GeoSphere</div>
<div class="bt" style="left:985px;top:261px">Cylinder</div><div class="bt" style="left:1063px;top:261px">Tube</div>
<div class="bt" style="left:985px;top:282px">Torus</div><div class="bt" style="left:1063px;top:282px">Pyramid</div>
<div class="bt" style="left:985px;top:303px">Teapot</div><div class="bt" style="left:1063px;top:303px">Plane</div>
<div class="sk" style="left:983px;top:355px;width:131px;height:20px"><span class="tx" style="letter-spacing:-.3px;top:3px">Cylinder02</span></div>
<svg class="a" style="left:0;top:739px" width="1152" height="93" viewBox="0 739 1152 93">
<defs>
<pattern id="dt" width="2" height="2" patternUnits="userSpaceOnUse"><rect width="2" height="2" fill="#c5c5c5"/><rect width="1" height="1" fill="#d2d2d2"/><rect x="1" y="1" width="1" height="1" fill="#d2d2d2"/></pattern>
<pattern id="dw" width="2" height="2" patternUnits="userSpaceOnUse"><rect width="2" height="2" fill="#c5c5c5"/><rect width="1" height="1" fill="#fff"/><rect x="1" y="1" width="1" height="1" fill="#fff"/></pattern>
<g id="bsep"><rect x="0" y="0" width="1" height="16" fill="#7c7c7c"/><rect x="1" y="0" width="1" height="16" fill="#ececec"/></g>
<g id="spn"><path d="M0 6 L3 2.800 L6 6 Z M0 10.200 L3 13.400 L6 10.200 Z" fill="#000"/></g>
</defs>
<rect x="0" y="739" width="968" height="18" fill="#b9b9b9"/>
<rect x="1" y="740" width="15" height="15" fill="#6c6c6c"/><rect x="1" y="740" width="14" height="14" fill="#f4f4f4"/><rect x="2" y="741" width="13" height="13" fill="#c5c5c5"/><rect x="2" y="741" width="12" height="12" fill="#c5c5c5"/>
<rect x="16" y="740" width="125" height="16" fill="#000"/><rect x="16" y="740" width="124" height="15" fill="#f4f4f4"/><rect x="17" y="741" width="123" height="14" fill="#000"/><rect x="17" y="741" width="122" height="13" fill="#c5c5c5"/>
<rect x="142" y="740" width="15" height="15" fill="#6c6c6c"/><rect x="142" y="740" width="14" height="14" fill="#f4f4f4"/><rect x="143" y="741" width="13" height="13" fill="#c5c5c5"/><rect x="143" y="741" width="12" height="12" fill="#c5c5c5"/>
<path d="M10.500 743.500 L6.500 747.500 L10.500 751.500 M147.500 743.500 L151.500 747.500 L147.500 751.500" fill="none" stroke="#000" stroke-width="1.100"/>
<rect x="0" y="757" width="968" height="1" fill="#f2f2f2"/><rect x="50" y="758" width="866" height="1" fill="#7a7a7a"/>
<rect x="50" y="759" width="866" height="25" fill="url(#dt)"/>
<rect x="50" y="758" width="9" height="26" fill="#8eb2d2"/><rect x="50.500" y="758.500" width="8" height="25" fill="none" stroke="#7a7a7a" stroke-width="1"/><rect x="54" y="759" width="1" height="13" fill="#5c7890"/>
<rect x="63" y="759" width="1" height="11" fill="#7c7c86"/><rect x="71" y="759" width="1" height="11" fill="#7c7c86"/><rect x="80" y="759" width="1" height="11" fill="#7c7c86"/><rect x="88" y="759" width="1" height="11" fill="#7c7c86"/><rect x="97" y="759" width="1" height="11" fill="#7c7c86"/><rect x="106" y="759" width="1" height="11" fill="#7c7c86"/><rect x="114" y="759" width="1" height="11" fill="#7c7c86"/><rect x="123" y="759" width="1" height="11" fill="#7c7c86"/><rect x="131" y="759" width="1" height="11" fill="#7c7c86"/><rect x="140" y="759" width="1" height="25" fill="#7c7c86"/><rect x="149" y="759" width="1" height="11" fill="#7c7c86"/><rect x="157" y="759" width="1" height="11" fill="#7c7c86"/><rect x="166" y="759" width="1" height="11" fill="#7c7c86"/><rect x="174" y="759" width="1" height="11" fill="#7c7c86"/><rect x="183" y="759" width="1" height="11" fill="#7c7c86"/><rect x="192" y="759" width="1" height="11" fill="#7c7c86"/><rect x="200" y="759" width="1" height="11" fill="#7c7c86"/><rect x="209" y="759" width="1" height="11" fill="#7c7c86"/><rect x="217" y="759" width="1" height="11" fill="#7c7c86"/><rect x="226" y="759" width="1" height="25" fill="#7c7c86"/><rect x="235" y="759" width="1" height="11" fill="#7c7c86"/><rect x="243" y="759" width="1" height="11" fill="#7c7c86"/><rect x="252" y="759" width="1" height="11" fill="#7c7c86"/><rect x="260" y="759" width="1" height="11" fill="#7c7c86"/><rect x="269" y="759" width="1" height="11" fill="#7c7c86"/><rect x="278" y="759" width="1" height="11" fill="#7c7c86"/><rect x="286" y="759" width="1" height="11" fill="#7c7c86"/><rect x="295" y="759" width="1" height="11" fill="#7c7c86"/><rect x="303" y="759" width="1" height="11" fill="#7c7c86"/><rect x="312" y="759" width="1" height="25" fill="#7c7c86"/><rect x="321" y="759" width="1" height="11" fill="#7c7c86"/><rect x="329" y="759" width="1" height="11" fill="#7c7c86"/><rect x="338" y="759" width="1" height="11" fill="#7c7c86"/><rect x="346" y="759" width="1" height="11" fill="#7c7c86"/><rect x="355" y="759" width="1" height="11" fill="#7c7c86"/><rect x="364" y="759" width="1" height="11" fill="#7c7c86"/><rect x="372" y="759" width="1" height="11" fill="#7c7c86"/><rect x="381" y="759" width="1" height="11" fill="#7c7c86"/><rect x="389" y="759" width="1" height="11" fill="#7c7c86"/><rect x="398" y="759" width="1" height="25" fill="#7c7c86"/><rect x="407" y="759" width="1" height="11" fill="#7c7c86"/><rect x="415" y="759" width="1" height="11" fill="#7c7c86"/><rect x="424" y="759" width="1" height="11" fill="#7c7c86"/><rect x="432" y="759" width="1" height="11" fill="#7c7c86"/><rect x="441" y="759" width="1" height="11" fill="#7c7c86"/><rect x="450" y="759" width="1" height="11" fill="#7c7c86"/><rect x="458" y="759" width="1" height="11" fill="#7c7c86"/><rect x="467" y="759" width="1" height="11" fill="#7c7c86"/><rect x="475" y="759" width="1" height="11" fill="#7c7c86"/><rect x="484" y="759" width="1" height="25" fill="#7c7c86"/><rect x="493" y="759" width="1" height="11" fill="#7c7c86"/><rect x="501" y="759" width="1" height="11" fill="#7c7c86"/><rect x="510" y="759" width="1" height="11" fill="#7c7c86"/><rect x="518" y="759" width="1" height="11" fill="#7c7c86"/><rect x="527" y="759" width="1" height="11" fill="#7c7c86"/><rect x="536" y="759" width="1" height="11" fill="#7c7c86"/><rect x="544" y="759" width="1" height="11" fill="#7c7c86"/><rect x="553" y="759" width="1" height="11" fill="#7c7c86"/><rect x="561" y="759" width="1" height="11" fill="#7c7c86"/><rect x="570" y="759" width="1" height="25" fill="#7c7c86"/><rect x="579" y="759" width="1" height="11" fill="#7c7c86"/><rect x="587" y="759" width="1" height="11" fill="#7c7c86"/><rect x="596" y="759" width="1" height="11" fill="#7c7c86"/><rect x="604" y="759" width="1" height="11" fill="#7c7c86"/><rect x="613" y="759" width="1" height="11" fill="#7c7c86"/><rect x="622" y="759" width="1" height="11" fill="#7c7c86"/><rect x="630" y="759" width="1" height="11" fill="#7c7c86"/><rect x="639" y="759" width="1" height="11" fill="#7c7c86"/><rect x="647" y="759" width="1" height="11" fill="#7c7c86"/><rect x="656" y="759" width="1" height="25" fill="#7c7c86"/><rect x="665" y="759" width="1" height="11" fill="#7c7c86"/><rect x="673" y="759" width="1" height="11" fill="#7c7c86"/><rect x="682" y="759" width="1" height="11" fill="#7c7c86"/><rect x="690" y="759" width="1" height="11" fill="#7c7c86"/><rect x="699" y="759" width="1" height="11" fill="#7c7c86"/><rect x="708" y="759" width="1" height="11" fill="#7c7c86"/><rect x="716" y="759" width="1" height="11" fill="#7c7c86"/><rect x="725" y="759" width="1" height="11" fill="#7c7c86"/><rect x="733" y="759" width="1" height="11" fill="#7c7c86"/><rect x="742" y="759" width="1" height="25" fill="#7c7c86"/><rect x="751" y="759" width="1" height="11" fill="#7c7c86"/><rect x="759" y="759" width="1" height="11" fill="#7c7c86"/><rect x="768" y="759" width="1" height="11" fill="#7c7c86"/><rect x="776" y="759" width="1" height="11" fill="#7c7c86"/><rect x="785" y="759" width="1" height="11" fill="#7c7c86"/><rect x="794" y="759" width="1" height="11" fill="#7c7c86"/><rect x="802" y="759" width="1" height="11" fill="#7c7c86"/><rect x="811" y="759" width="1" height="11" fill="#7c7c86"/><rect x="819" y="759" width="1" height="11" fill="#7c7c86"/><rect x="828" y="759" width="1" height="25" fill="#7c7c86"/><rect x="837" y="759" width="1" height="11" fill="#7c7c86"/><rect x="845" y="759" width="1" height="11" fill="#7c7c86"/><rect x="854" y="759" width="1" height="11" fill="#7c7c86"/><rect x="862" y="759" width="1" height="11" fill="#7c7c86"/><rect x="871" y="759" width="1" height="11" fill="#7c7c86"/><rect x="880" y="759" width="1" height="11" fill="#7c7c86"/><rect x="888" y="759" width="1" height="11" fill="#7c7c86"/><rect x="897" y="759" width="1" height="11" fill="#7c7c86"/><rect x="905" y="759" width="1" height="11" fill="#7c7c86"/><rect x="914" y="759" width="1" height="25" fill="#7c7c86"/>
<text x="54.5" y="781" text-anchor="middle" font-family="Liberation Sans" font-size="11" fill="#000" stroke="#000" stroke-width=".2">0</text>
<text x="140.5" y="781" text-anchor="middle" font-family="Liberation Sans" font-size="11" fill="#000" stroke="#000" stroke-width=".2">10</text>
<text x="226.5" y="781" text-anchor="middle" font-family="Liberation Sans" font-size="11" fill="#000" stroke="#000" stroke-width=".2">20</text>
<text x="312.5" y="781" text-anchor="middle" font-family="Liberation Sans" font-size="11" fill="#000" stroke="#000" stroke-width=".2">30</text>
<text x="398.5" y="781" text-anchor="middle" font-family="Liberation Sans" font-size="11" fill="#000" stroke="#000" stroke-width=".2">40</text>
<text x="484.5" y="781" text-anchor="middle" font-family="Liberation Sans" font-size="11" fill="#000" stroke="#000" stroke-width=".2">50</text>
<text x="570.5" y="781" text-anchor="middle" font-family="Liberation Sans" font-size="11" fill="#000" stroke="#000" stroke-width=".2">60</text>
<text x="656.5" y="781" text-anchor="middle" font-family="Liberation Sans" font-size="11" fill="#000" stroke="#000" stroke-width=".2">70</text>
<text x="742.5" y="781" text-anchor="middle" font-family="Liberation Sans" font-size="11" fill="#000" stroke="#000" stroke-width=".2">80</text>
<text x="828.5" y="781" text-anchor="middle" font-family="Liberation Sans" font-size="11" fill="#000" stroke="#000" stroke-width=".2">90</text>
<text x="914.5" y="781" text-anchor="middle" font-family="Liberation Sans" font-size="11" fill="#000" stroke="#000" stroke-width=".2">100</text>
<g fill="none" stroke="#000" stroke-width="1"><rect x="13.500" y="763.500" width="16" height="4"/><path d="M14 766 q3 -2.500 6 -.5 t9 -.5"/><rect x="13.500" y="775.500" width="16" height="2.500"/><path d="M17.500 774 V769.500 M15.500 771.500 L17.500 769.500 L19.500 771.500 M25.500 769 V773.500 M23.500 771.500 L25.500 773.500 L27.500 771.500"/></g>
<rect x="0" y="784" width="968" height="1" fill="#c5c5c5"/>
<rect x="2" y="787" width="96" height="21" fill="#fbfbfb"/><rect x="2" y="787" width="95" height="20" fill="#8a8478"/><rect x="3" y="788" width="94" height="19" fill="#dcc6c6"/>
<rect x="2" y="810" width="96" height="22" fill="#fbfbfb"/><rect x="2" y="810" width="95" height="22" fill="#8a8478"/><rect x="3" y="811" width="94" height="21" fill="#fff"/>
<rect x="100.500" y="785" width="1.500" height="47" fill="#f6f6f6"/><rect x="104" y="785" width="1" height="47" fill="#6e6e6e"/>
<rect x="107" y="788" width="200" height="21" fill="#f4f4f4"/><rect x="107" y="788" width="199" height="20" fill="#7c7c7c"/><rect x="108" y="789" width="198" height="19" fill="#c5c5c5"/>
<rect x="107" y="813" width="499" height="22" fill="#f4f4f4"/><rect x="107" y="813" width="498" height="21" fill="#7c7c7c"/><rect x="108" y="814" width="497" height="20" fill="#c5c5c5"/>
<path d="M317.500 796 V793.500 Q317.500 791.500 320 791.500 Q322.500 791.500 322.500 793.500 V796" fill="none" stroke="#000" stroke-width="1.200"/><rect x="316" y="796" width="8" height="7" fill="#000"/><rect x="316" y="798" width="8" height="1" fill="#c5c5c5"/><rect x="316" y="800" width="8" height="1" fill="#c5c5c5"/>
<rect x="340.500" y="790.500" width="14" height="14" fill="#c5c5c5" stroke="#000" stroke-width="1.200"/><path d="M347.500 791 V804 M341 797.500 H354" stroke="#000" stroke-width="1"/><circle cx="347.500" cy="797.500" r="2.200" fill="#606060" stroke="#000" stroke-width=".8"/>
<rect x="373" y="788" width="57" height="21" fill="#fafafa"/><rect x="373" y="788" width="56" height="20" fill="#6a6a6a"/><rect x="374" y="789" width="55" height="19" fill="#080808"/><rect x="375" y="790" width="54" height="18" fill="#d6d6d6"/><rect x="375" y="790" width="53" height="17" fill="#e8e8e8"/>
<rect x="455" y="788" width="57" height="21" fill="#fafafa"/><rect x="455" y="788" width="56" height="20" fill="#6a6a6a"/><rect x="456" y="789" width="55" height="19" fill="#080808"/><rect x="457" y="790" width="54" height="18" fill="#d6d6d6"/><rect x="457" y="790" width="53" height="17" fill="#e8e8e8"/>
<rect x="538" y="788" width="56" height="21" fill="#fafafa"/><rect x="538" y="788" width="55" height="20" fill="#6a6a6a"/><rect x="539" y="789" width="54" height="19" fill="#080808"/><rect x="540" y="790" width="53" height="18" fill="#d6d6d6"/><rect x="540" y="790" width="52" height="17" fill="#e8e8e8"/>
<rect x="432" y="790" width="11" height="16" fill="#cecece"/><rect x="432" y="790" width="1" height="16" fill="#f4f4f4"/><rect x="432" y="790" width="11" height="1" fill="#eeeeee"/><rect x="442" y="790" width="1" height="16" fill="#7c7c7c"/><rect x="432" y="805" width="11" height="1" fill="#7c7c7c"/><rect x="433" y="797" width="9" height="1" fill="#9c9c9c"/><rect x="433" y="798" width="9" height="1" fill="#f0f0f0"/><use href="#spn" x="433.5" y="789.800"/>
<rect x="514" y="790" width="11" height="16" fill="#cecece"/><rect x="514" y="790" width="1" height="16" fill="#f4f4f4"/><rect x="514" y="790" width="11" height="1" fill="#eeeeee"/><rect x="524" y="790" width="1" height="16" fill="#7c7c7c"/><rect x="514" y="805" width="11" height="1" fill="#7c7c7c"/><rect x="515" y="797" width="9" height="1" fill="#9c9c9c"/><rect x="515" y="798" width="9" height="1" fill="#f0f0f0"/><use href="#spn" x="515.5" y="789.800"/>
<rect x="596" y="790" width="11" height="16" fill="#cecece"/><rect x="596" y="790" width="1" height="16" fill="#f4f4f4"/><rect x="596" y="790" width="11" height="1" fill="#eeeeee"/><rect x="606" y="790" width="1" height="16" fill="#7c7c7c"/><rect x="596" y="805" width="11" height="1" fill="#7c7c7c"/><rect x="597" y="797" width="9" height="1" fill="#9c9c9c"/><rect x="597" y="798" width="9" height="1" fill="#f0f0f0"/><use href="#spn" x="597.5" y="789.800"/>
<rect x="609" y="788" width="100" height="21" fill="#f4f4f4"/><rect x="609" y="788" width="99" height="20" fill="#7c7c7c"/><rect x="610" y="789" width="98" height="19" fill="#c5c5c5"/>
<rect x="609" y="813" width="100" height="22" fill="#f4f4f4"/><rect x="609" y="813" width="99" height="21" fill="#7c7c7c"/><rect x="610" y="814" width="98" height="20" fill="#c5c5c5"/>
<rect x="711" y="787" width="43" height="43" fill="#6c6c6c"/><rect x="711" y="787" width="42" height="42" fill="#f4f4f4"/><rect x="712" y="788" width="41" height="41" fill="#c5c5c5"/><rect x="712" y="788" width="40" height="40" fill="#c5c5c5"/>
<ellipse cx="724.500" cy="808.600" rx="3.900" ry="3.600" fill="none" stroke="#000" stroke-width="2"/><path d="M728.500 808.600 H743.500" stroke="#000" stroke-width="2.400" fill="none"/><path d="M736 809 V812.500 M740.300 809 V813.300" stroke="#000" stroke-width="2.200" fill="none"/>
<rect x="757" y="787" width="47" height="22" fill="#6c6c6c"/><rect x="757" y="787" width="46" height="21" fill="#f4f4f4"/><rect x="758" y="788" width="45" height="20" fill="#c5c5c5"/><rect x="758" y="788" width="44" height="19" fill="#c5c5c5"/>
<rect x="757" y="810" width="47" height="21" fill="#6c6c6c"/><rect x="757" y="810" width="46" height="20" fill="#f4f4f4"/><rect x="758" y="811" width="45" height="19" fill="#c5c5c5"/><rect x="758" y="811" width="44" height="18" fill="#c5c5c5"/>
<rect x="808" y="810" width="116" height="21" fill="#6c6c6c"/><rect x="808" y="810" width="115" height="20" fill="#f4f4f4"/><rect x="809" y="811" width="114" height="19" fill="#c5c5c5"/><rect x="809" y="811" width="113" height="18" fill="#c5c5c5"/>
<rect x="932" y="793" width="2" height="9" fill="#000"/><path d="M934 797.500 L940.500 793 V802 Z M940.500 797.500 L947.500 793 V802 Z" fill="#000"/>
<use href="#bsep" x="953" y="790"/>
<path d="M960 797.500 L966.500 793.500 V801.500 Z" fill="#000"/><rect x="967.500" y="794" width="2" height="7" fill="#000"/><rect x="970.500" y="794" width="2" height="7" fill="#000"/>
<rect x="982" y="791" width="14.200" height="13.200" fill="none" stroke="#000" stroke-width="2"/><path d="M986 794 L993.300 797.500 L986 801 Z" fill="#000"/><path d="M999 807 V804 L996 807 Z" fill="#000"/><path d="M996 808.300 L1000 804.300" stroke="#fff" stroke-width="1" transform="translate(-1.500 -1.500)"/>
<rect x="1005" y="794" width="2" height="7" fill="#000"/><rect x="1008" y="794" width="2" height="7" fill="#000"/><path d="M1017.800 797.500 L1011 793.500 V801.500 Z" fill="#000"/>
<use href="#bsep" x="1025" y="790"/>
<path d="M1037 797.500 L1030 793 V802 Z M1044 797.500 L1037 793 V802 Z" fill="#000"/><rect x="1044" y="793" width="2" height="9" fill="#000"/>
<use href="#bsep" x="1054" y="790"/>
<rect x="935" y="815" width="1.300" height="8" fill="#000"/><rect x="945" y="815" width="1.300" height="8" fill="#000"/><rect x="940" y="815" width="1.300" height="8" fill="#000"/><path d="M936.500 819 L940 816 V822 Z M944.800 819 L941.300 816 V822 Z" fill="#000"/>
<use href="#bsep" x="953" y="812"/>
<rect x="955" y="810" width="65" height="22" fill="#fafafa"/><rect x="955" y="810" width="64" height="21" fill="#6a6a6a"/><rect x="956" y="811" width="63" height="20" fill="#080808"/><rect x="957" y="812" width="62" height="19" fill="#d6d6d6"/><rect x="957" y="812" width="61" height="18" fill="#e8e8e8"/>
<rect x="1020" y="812" width="10" height="16" fill="#cecece"/><rect x="1020" y="812" width="1" height="16" fill="#f4f4f4"/><rect x="1020" y="812" width="10" height="1" fill="#eeeeee"/><rect x="1029" y="812" width="1" height="16" fill="#7c7c7c"/><rect x="1020" y="827" width="10" height="1" fill="#7c7c7c"/><rect x="1021" y="819" width="8" height="1" fill="#9c9c9c"/><rect x="1021" y="820" width="8" height="1" fill="#f0f0f0"/><use href="#spn" x="1021.8" y="811.800"/>
<use href="#bsep" x="1030.500" y="812"/>
<rect x="1036.500" y="814" width="9.500" height="9.500" fill="#c5c5c5" stroke="#000" stroke-width="1.100"/><rect x="1036" y="813.500" width="10.500" height="2" fill="#000"/><circle cx="1044.600" cy="820.200" r="4.200" fill="#c5c5c5" fill-opacity=".7" stroke="#c01818" stroke-width="1.200"/><path d="M1044.600 817.500 V820.500 H1047" stroke="#801010" stroke-width=".9" fill="none"/>
<use href="#bsep" x="1054" y="812"/>
<circle cx="1065" cy="795.200" r="4.300" fill="#e4e4ec" stroke="#1c1c8c" stroke-width="1.200"/><path d="M1068.300 798.500 L1073.500 804" stroke="#2030c8" stroke-width="2"/><path d="M1068 798.300 L1070 800.400" stroke="#000" stroke-width="1.600"/>
<path d="M1085.500 790.500 H1097.500 V800.500 H1085.500 Z M1091.500 790.500 V800.500 M1085.500 795.500 H1097.500" fill="none" stroke="#8c1818" stroke-width="1.200"/><circle cx="1086" cy="799" r="3.400" fill="#e4e4ec" stroke="#1c1c8c" stroke-width="1.100"/><path d="M1088.500 801.600 L1092 805" stroke="#2030c8" stroke-width="1.700"/>
<path d="M1105.500 793.500 V790.500 H1108.500 M1117.500 790.500 H1120.500 V793.500 M1120.500 801.500 V804.500 H1117.500 M1108.500 804.500 H1105.500 V801.500" fill="none" stroke="#000" stroke-width="1.200"/><path d="M1108.500 794.500 L1110.500 792 H1118 V800.500 L1115.500 803" fill="#909090" stroke="#1c1c8c" stroke-width="1"/><rect x="1108.500" y="794.500" width="7" height="8.500" fill="#c0c0c0" stroke="#1c1c8c" stroke-width="1.100"/><path d="M1110.500 792.500 H1117.500" stroke="#fff" stroke-width="1"/>
<path d="M1123.500 806.500 V803 L1120 806.500 Z" fill="#000"/><path d="M1119 806 L1123 802" stroke="#fff" stroke-width="1"/>
<path d="M1131.500 790.500 H1143.500 V800.500 H1131.500 Z M1137.500 790.500 V800.500 M1131.500 795.500 H1143.500" fill="none" stroke="#8c1818" stroke-width="1.200"/><path d="M1128.500 797.500 L1130.500 795.300 H1137.300 V802 L1135 804.500" fill="#d8d8d8" stroke="#1c1c8c" stroke-width="1"/><rect x="1128.500" y="797.500" width="6.500" height="7" fill="#c0c0c0" stroke="#1c1c8c" stroke-width="1.100"/>
<path d="M1146.500 806.500 V803 L1143 806.500 Z" fill="#000"/><path d="M1142 806 L1146 802" stroke="#fff" stroke-width="1"/>
<rect x="1059.500" y="812.500" width="15" height="14" fill="url(#dw)" stroke="#000" stroke-width="1.200" stroke-dasharray="2.500 1.500"/><circle cx="1065.300" cy="817.500" r="3.800" fill="#dcdce4" stroke="#1c1c8c" stroke-width="1.100"/><path d="M1068 820.300 L1071.500 824" stroke="#2030c8" stroke-width="1.900"/>
<path d="M1082.500 820 L1084.500 819 L1086.500 821.500 L1085.500 814.500 Q1086.500 813 1087.500 814.500 L1088.500 818 L1088.500 813.300 Q1089.600 812 1090.600 813.300 L1091 818 L1091.800 813.800 Q1093 812.600 1093.800 814 L1093.600 818.600 L1095 815.800 Q1096.200 815 1096.800 816.300 L1096.300 822 Q1096 825.500 1093.500 827.300 H1088 Q1085.500 825 1082.500 820 Z" fill="url(#dw)" stroke="#000" stroke-width="1"/>
<circle cx="1111.800" cy="820.200" r="4.800" fill="none" stroke="#000" stroke-width="1"/><path d="M1111.800 820.200 V812.500 M1111.800 820.200 H1120 M1111.800 820.200 L1106 826" stroke="#1c1c8c" stroke-width="1.100" fill="none"/><path d="M1111.800 811 L1109.600 814.500 H1114 Z M1121.500 820.200 L1118 818 V822.400 Z M1105 827 L1105.600 823.400 L1108.600 826.400 Z" fill="#000"/>
<path d="M1123.500 828.500 V825 L1120 828.500 Z" fill="#000"/><path d="M1119 828 L1123 824" stroke="#fff" stroke-width="1"/>
<rect x="1136.500" y="819.500" width="7.500" height="6.500" fill="none" stroke="#000" stroke-width="1.300"/><rect x="1129.500" y="812.500" width="11" height="11" fill="#c5c5c5" stroke="#1c1c8c" stroke-width="1.300"/><path d="M1132.500 815.500 L1137.500 820.500" stroke="#000" stroke-width="1" stroke-dasharray="1.500 1"/><path d="M1131.500 814.500 L1135 815 L1132 818 Z" fill="#000"/>
</svg>
<style>.bx{position:absolute;letter-spacing:-.12px;font-size:11px;line-height:13px;white-space:nowrap}</style>
<div class="bx" style="left:16px;top:741px;width:125px;text-align:center">0 / 100</div>
<div class="bx" style="left:113px;top:793px">1 Object Selected</div>
<div class="bx" style="left:113px;top:817px">Click and drag to select and move objects</div>
<div class="bx" style="left:363px;top:793px">X:</div><div class="bx" style="left:377px;top:793px">0.232</div>
<div class="bx" style="left:445px;top:793px">Y:</div><div class="bx" style="left:460px;top:793px">0.0</div>
<div class="bx" style="left:527px;top:793px">Z:</div><div class="bx" style="left:541px;top:793px">-0.232</div>
<div class="bx" style="left:615px;top:793px">Grid = 10.0</div>
<div class="bx" style="left:615px;top:817px">Add Time Tag</div>
<div class="bx" style="left:757px;top:792px;width:47px;text-align:center">Auto Key</div>
<div class="bx" style="left:757px;top:815px;width:47px;text-align:center">Set Key</div>
<div class="bx" style="left:808px;top:815px;width:116px;text-align:center">Key Filters...</div>
<div class="sk" style="left:808px;top:787px;width:115px;height:21px"><span class="tx" style="top:4px">Selected</span><div class="cb"></div></div>
<div class="bx" style="left:960px;top:814px">0</div>

</div></body></html>
